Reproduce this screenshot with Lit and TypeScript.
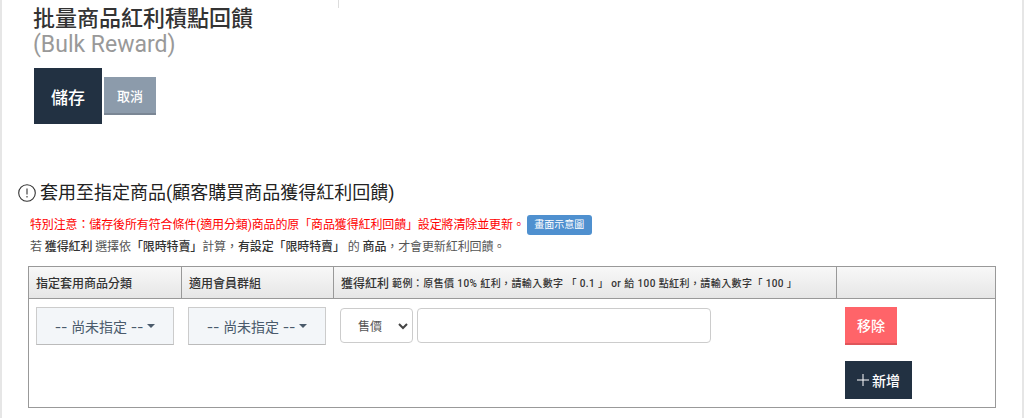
import { LitElement, html, css } from "lit";
import { customElement } from "lit/decorators.js";

@customElement("app-root")
export class AppRoot extends LitElement {
  static styles = css`
    :host {
      display: block;
      width: 1024px;
      height: 418px;
      overflow: hidden;
      box-sizing: border-box;
      background: #fff;
      border-left: 2px solid #e6e6e6;
      border-right: 2px solid #e6e6e6;
      font-family: Roboto, "Noto Sans CJK TC", sans-serif;
      color: #333;
      position: relative;
    }
    .tick { position: absolute; left: 336px; top: 0; width: 1px; height: 8px; background: #ddd; }
    .page { padding: 6px 0 0 0; }
    .head { padding-left: 32px; }
    h1 { margin: 0 0 0 -1px; font-size: 22px; font-weight: 500; line-height: 26px; color: #333; }
    .en { font-size: 23px; font-weight: 400; line-height: 25px; color: #999; margin-left: -1px; }
    .actions { display: flex; align-items: flex-start; gap: 2px; margin-top: 11px; }
    .save { width: 68px; height: 56px; background: #223142; color: #fff; font-size: 17px; font-weight: 500; display: flex; align-items: center; justify-content: center; }
    .cancel { margin-top: 9px; width: 52px; height: 38px; box-sizing: border-box; background: #8c9bab; border-bottom: 2px solid #7a8694; color: #fff; font-size: 13px; font-weight: 500; display: flex; align-items: center; justify-content: center; }
    .section { margin: 58px 0 0 17px; width: 976px; }
    h2 { margin: 0; display: flex; align-items: center; gap: 4px; font-size: 18px; font-weight: 400; line-height: 22px; color: #222; }
    h2 svg { margin-left: -1px; }
    .note { margin: 11px 0 0 11px; display: flex; align-items: center; font-size: 12px; letter-spacing: -0.13px; line-height: 18px; color: #f00; }
    .tag { margin-left: 2px; width: 65px; height: 20px; border-radius: 3px; background: #4f90cf; color: #fff; font-size: 10px; letter-spacing: 0; display: flex; align-items: center; justify-content: center; }
    .sub { margin: 3px 0 0 11px; font-size: 12px; letter-spacing: -0.11px; line-height: 18px; color: #555; }
    .sub b { font-weight: 500; color: #333; }
    .table { margin: 10px 0 0 9px; width: 968px; height: 142px; box-sizing: border-box; border: 1px solid #999; display: flex; flex-direction: column; }
    .thead { display: grid; grid-template-columns: 153px 152px 503px 1fr; height: 32px; box-sizing: border-box; border-bottom: 1px solid #999; background: linear-gradient(#f8f8f8, #e6e6e6); }
    .th { display: flex; align-items: center; padding-left: 7px; font-size: 12px; font-weight: 500; border-right: 1px solid #999; white-space: nowrap; }
    .th:last-child { border-right: 0; }
    .th small { font-size: 10px; letter-spacing: 0.41px; margin-left: 3px; }
    .tbody { display: grid; grid-template-columns: 152px 152px 504px 1fr; flex: 1; }
    .td { padding: 8px 7px; }
    .drop { width: 138px; height: 38px; box-sizing: border-box; background: #f3f6f9; border: 1px solid #ccc; border-bottom: 1px solid #bbb; color: #4a5a6b; font-family: Inter, "Noto Sans CJK TC", sans-serif; font-size: 14px; letter-spacing: -0.1px; display: flex; align-items: center; justify-content: center; gap: 4px; }
    .caret { width: 0; height: 0; border-left: 4px solid transparent; border-right: 4px solid transparent; border-top: 4px solid #4a5a6b; }
    .inputs { display: flex; gap: 4px; margin-top: 1px; margin-left: 0; }
    .sel { width: 73px; height: 35px; box-sizing: border-box; border: 1px solid #ccc; border-radius: 4px; display: flex; align-items: center; justify-content: space-between; padding: 0 3px 0 17px; font-size: 12px; color: #555; }
    .input { width: 294px; height: 35px; box-sizing: border-box; border: 1px solid #ccc; border-radius: 4px; }
    .ops { padding: 8px 0 0 8px; display: flex; flex-direction: column; align-items: flex-start; gap: 16px; }
    .remove { width: 52px; height: 38px; box-sizing: border-box; background: #ff6469; border-bottom: 2px solid #e0555a; color: #fff; font-size: 14px; font-weight: 500; display: flex; align-items: center; justify-content: center; }
    .add { width: 67px; height: 38px; background: #223142; color: #fff; font-size: 14px; font-weight: 500; display: flex; align-items: center; justify-content: center; gap: 3px; }
  `;

  render() {
    return html`
      <div class="tick"></div>
      <div class="page">
        <div class="head">
          <h1>批量商品紅利積點回饋</h1>
          <div class="en">(Bulk Reward)</div>
          <div class="actions">
            <div class="save">儲存</div>
            <div class="cancel">取消</div>
          </div>
        </div>
        <div class="section">
          <h2>
            <svg width="18" height="18" viewBox="0 0 18 18" fill="none" stroke="#333" stroke-width="1.1">
              <circle cx="9" cy="9" r="8.3"></circle>
              <path d="M9 4.4v6M9 12v1.6" stroke-width="1.3" stroke="#555"></path>
            </svg>
            套用至指定商品(顧客購買商品獲得紅利回饋)
          </h2>
          <div class="note">
            特別注意：儲存後所有符合條件(適用分類)商品的原「商品獲得紅利回饋」設定將清除並更新。
            <span class="tag">畫面示意圖</span>
          </div>
          <div class="sub">若 <b>獲得紅利</b> 選擇依<b>「限時特賣」</b>計算，<b>有設定「限時特賣」</b> 的 <b>商品</b>，才會更新紅利回饋。</div>
          <div class="table">
            <div class="thead">
              <div class="th">指定套用商品分類</div>
              <div class="th">適用會員群組</div>
              <div class="th">獲得紅利<small>範例：原售價 10% 紅利，請輸入數字 「 0.1 」 or 給 100 點紅利，請輸入數字「 100 」</small></div>
              <div class="th"></div>
            </div>
            <div class="tbody">
              <div class="td"><div class="drop">-- 尚未指定 --<span class="caret"></span></div></div>
              <div class="td"><div class="drop">-- 尚未指定 --<span class="caret"></span></div></div>
              <div class="td">
                <div class="inputs">
                  <div class="sel">售價
                    <svg width="12" height="12" viewBox="0 0 12 12" fill="none" stroke="#444" stroke-width="2"><path d="M2 4l4 4 4-4"></path></svg>
                  </div>
                  <div class="input"></div>
                </div>
              </div>
              <div class="ops">
                <div class="remove">移除</div>
                <div class="add">
                  <svg width="12" height="12" viewBox="0 0 12 12" stroke="#fff" stroke-width="1"><path d="M6 0v12M0 6h12"></path></svg>
                  新增
                </div>
              </div>
            </div>
          </div>
        </div>
      </div>
    `;
  }
}
